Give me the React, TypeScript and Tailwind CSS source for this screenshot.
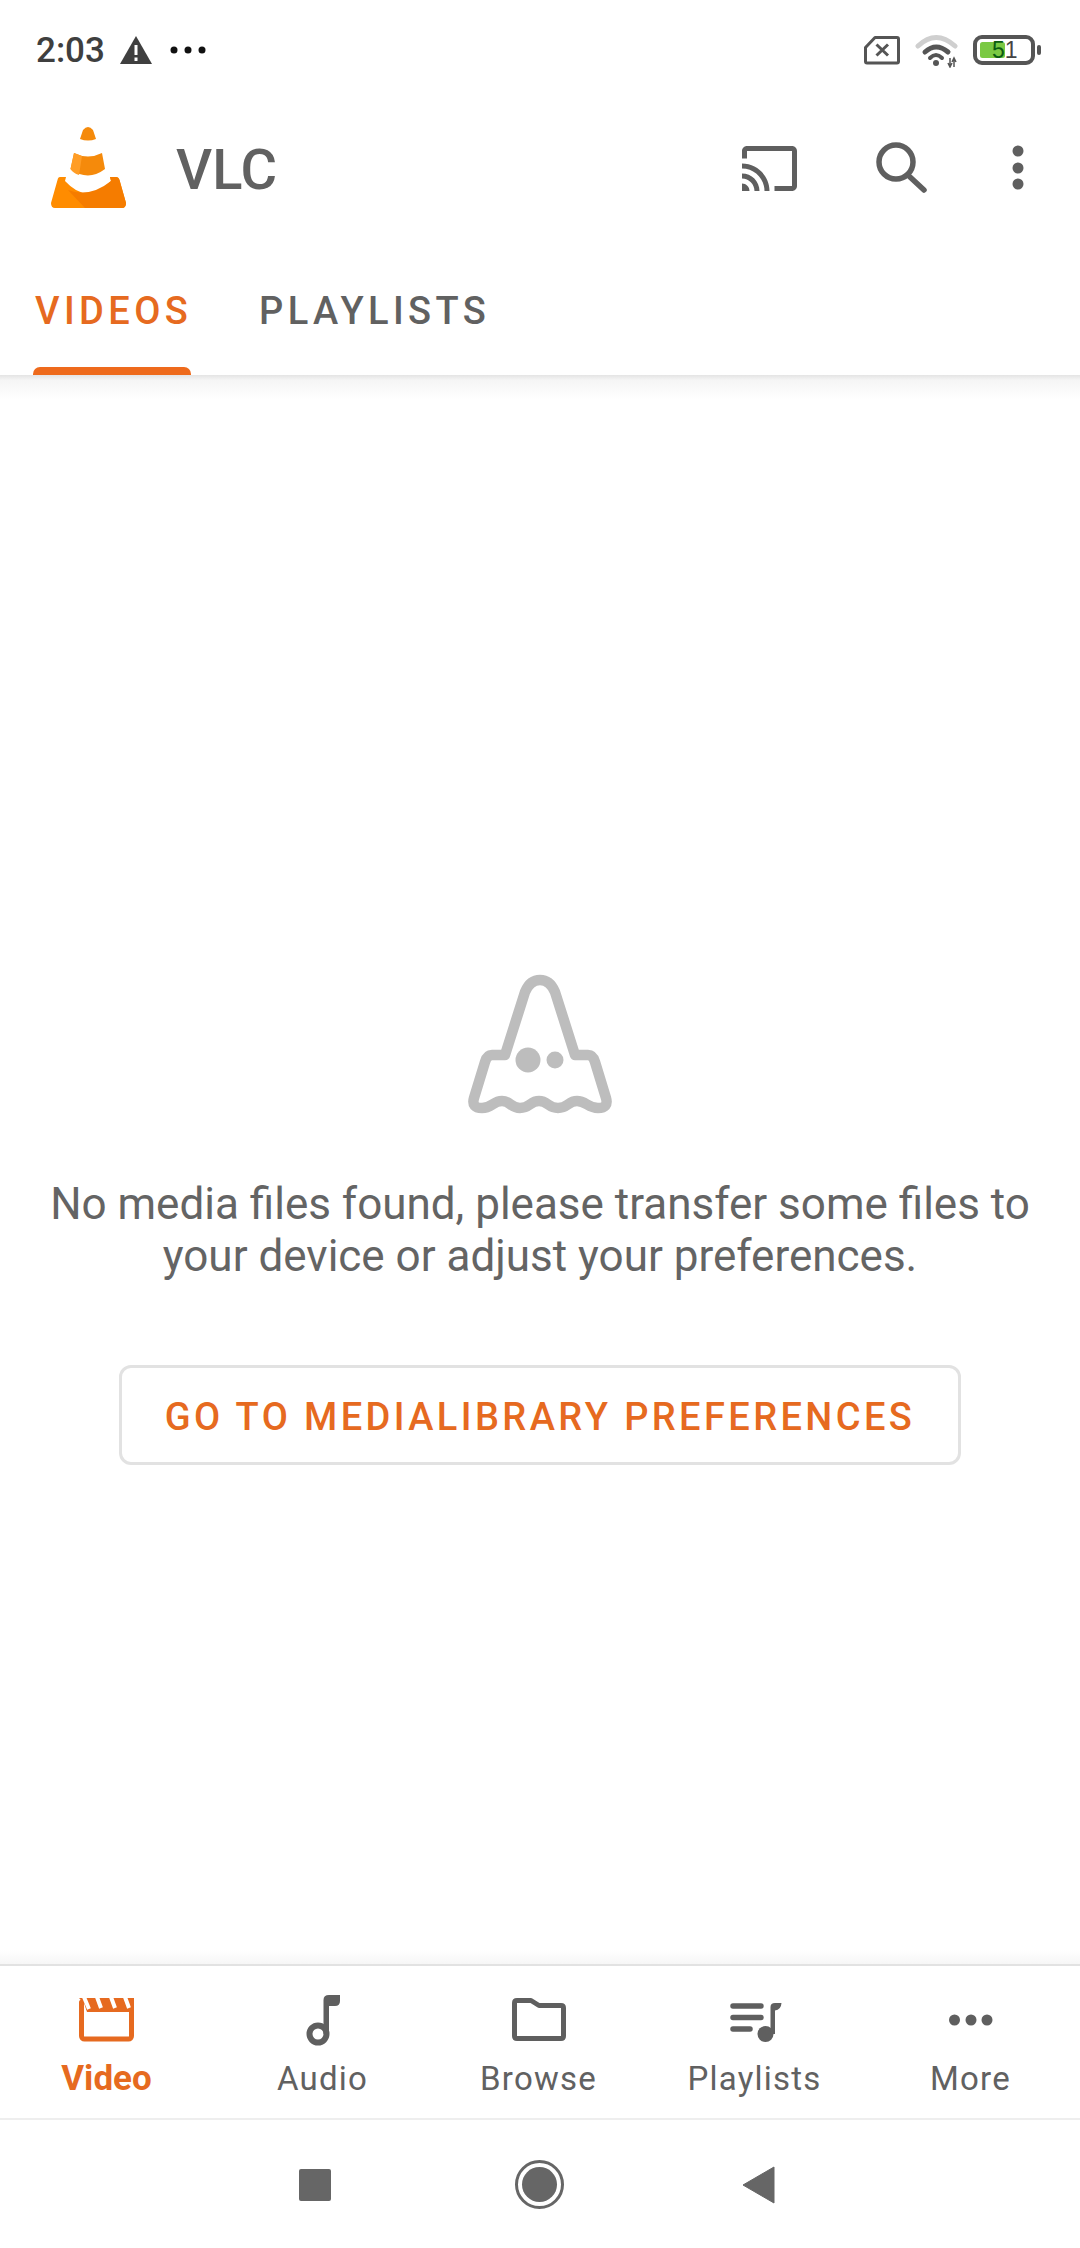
import type { ReactNode } from 'react'

const GREY = '#5f5f5f'
const ORANGE = '#e66a20'

function VideoIcon() {
  return (
    <svg width="60" height="60" viewBox="78 1990 60 60">
      <rect x="82.5" y="1999.5" width="50" height="38.5" rx="3" fill="none" stroke={ORANGE} strokeWidth="5" />
      <path d="M80 1997H135V2011H88L85 2002Z" fill={ORANGE} />
      <path d="M80 1999L85 2011H80Z" fill={ORANGE} />
      <path d="M85 1996L90 2008M98 1996L102 2007M112 1996L116 2007M126 1996L130 2007" stroke="#fff" strokeWidth="4" />
    </svg>
  )
}

function AudioIcon() {
  return (
    <svg width="60" height="60" viewBox="294 1990 60 60" fill={GREY}>
      <circle cx="319" cy="2033" r="8.5" fill="none" stroke={GREY} strokeWidth="6" />
      <path d="M324.5 2033V1999Q324.5 1994 330 1994H341V2000Q341 2005 336 2005H330V2033Z" />
    </svg>
  )
}

function BrowseIcon() {
  return (
    <svg width="60" height="60" viewBox="510 1990 60 60">
      <path
        d="M518 1999.5H532L540 2004.5H562Q564.500 2004.500 564.500 2007V2035Q564.500 2037.500 562 2037.500H518Q515.500 2037.500 515.500 2035V2002Q515.500 1999.500 518 1999.500Z"
        fill="none"
        stroke={GREY}
        strokeWidth="5"
        strokeLinejoin="round"
      />
    </svg>
  )
}

function PlaylistsIcon() {
  return (
    <svg width="60" height="60" viewBox="726 1990 60 60" fill={GREY}>
      <path d="M734 2005H762M734 2016.500H762M734 2028H751" stroke={GREY} strokeWidth="5.500" strokeLinecap="round" />
      <circle cx="766.500" cy="2033" r="8" />
      <path d="M771.500 2033V2006Q771.500 2002 776 2002H782.500Q782 2009 776 2009.500V2033Z" />
    </svg>
  )
}

function MoreIcon() {
  return (
    <svg width="60" height="60" viewBox="942 1990 60 60" fill={GREY}>
      <circle cx="955.500" cy="2019" r="5.500" />
      <circle cx="972" cy="2019" r="5.500" />
      <circle cx="988" cy="2019" r="5.500" />
    </svg>
  )
}

function NavItem({ icon, label, active }: { icon: ReactNode; label: string; active?: boolean }) {
  return (
    <div className="flex flex-col items-center pt-[25px] pr-[3px]">
      {icon}
      <div
        className={
          active
            ? 'mt-[8px] text-[35px] leading-[40px] font-bold text-[#e66a20]'
            : 'mt-[8px] text-[33px] leading-[40px] tracking-[1.200px] text-[#616161]'
        }
      >
        {label}
      </div>
    </div>
  )
}

export default function App() {
  return (
    <div className="flex h-[2248px] w-[1080px] flex-col overflow-hidden bg-white font-['Roboto',sans-serif]">
      {/* status bar */}
      <div className="flex h-[100px] shrink-0 items-center pr-[35px] pl-[36px]">
        <span className="text-[35px] leading-none font-medium text-[#3f3f3f]">2:03</span>
        <svg className="ml-[15px]" width="32" height="30" viewBox="122 35 32 30">
          <path d="M138 36L154 64H122Z" fill="#3f3f3f" />
          <path d="M136.500 45H139.500V55H136.500ZM136.500 57.500H139.500V61H136.500Z" fill="#fff" />
        </svg>
        <svg className="ml-[18px]" width="36" height="10" viewBox="172 45 36 10" fill="#111">
          <circle cx="176" cy="50" r="3.500" />
          <circle cx="190" cy="50" r="3.500" />
          <circle cx="204" cy="50" r="3.500" />
        </svg>
        <div className="ml-auto flex items-center">
          <svg width="50" height="36" viewBox="860 32 50 36" fill="none" stroke="#555" strokeWidth="3">
            <path d="M875 37.500H897Q898.500 37.500 898.500 39V61.500Q898.500 63 897 63H867Q865.500 63 865.500 61.500V47.500Z" strokeLinejoin="round" />
            <path d="M876.500 44.500L888 55.500M888 44.500L876.500 55.500" strokeWidth="3" />
          </svg>
          <svg width="60" height="36" viewBox="910 32 60 36" fill="none">
            <path d="M918 46Q936 29 955 46" stroke="#cfcfcf" strokeWidth="5" strokeLinecap="round" />
            <path d="M925 52Q936 42 948 52" stroke="#555" strokeWidth="5" strokeLinecap="round" />
            <path d="M930 58Q936 52 942 58" stroke="#555" strokeWidth="4" strokeLinecap="round" />
            <circle cx="936" cy="63" r="3" fill="#555" />
            <path d="M950 58V67M948 63L950 67L952 63M954 67V58M952 62L954 58L956 62" stroke="#555" strokeWidth="1.500" />
          </svg>
          <div className="relative h-[36px] w-[75px]">
            <svg width="75" height="36" viewBox="970 32 75 36" fill="none">
              <rect x="975" y="37" width="58" height="26" rx="7" stroke="#555" strokeWidth="4" />
              <rect x="980" y="42" width="25" height="16" rx="2.500" fill="#7ac943" />
              <rect x="1037" y="45" width="4" height="10" rx="2" fill="#555" />
            </svg>
            <span className="absolute top-[3px] left-[22px] font-['Liberation_Sans',sans-serif] text-[23px] leading-[30px] text-[#444]">
              <span className="text-[#0b5c12]">5</span>1
            </span>
          </div>
        </div>
      </div>

      {/* toolbar */}
      <div className="flex h-[136px] shrink-0 items-center pr-[41px] pl-[51px]">
        <svg width="75" height="82" viewBox="51 126 75 82">
          <path d="M80 138Q88 141 96 138L93 129Q88 123 83 129Z" fill="#f58a0b" />
          <path d="M74 152Q88 159 102 152L105 168Q88 181 70.500 168Z" fill="#f58a0b" />
          <path d="M74 152L82 155L79 174Q73 172 70.500 168Z" fill="#ff9d26" />
          <path
            d="M60 176H66L65 180Q88 205 111 180L110 176H116Q118.500 176 119.500 179L126 202Q126 207 122 207H55Q51 207 51 202L57.500 179Q58 176 60 176Z"
            fill="#ff8c00"
          />
          <path
            d="M85 207L68 189Q90 197 111 180L110 176H116Q118.500 176 119.500 179L126 202Q126 207 122 207Z"
            fill="#f57c00"
          />
        </svg>
        <span className="mt-[3px] ml-[50px] text-[56px] leading-none font-medium text-[#616161]">VLC</span>
        <svg className="ml-auto" width="70" height="60" viewBox="735 136 70 60" fill={GREY}>
          <g transform="translate(740.500 136.500) scale(2.500)">
            <path d="M21 3H3c-1.100 0-2 .9-2 2v3h2V5h18v14h-7v2h7c1.100 0 2-.9 2-2V5c0-1.100-.9-2-2-2zM1 18v3h3c0-1.660-1.340-3-3-3zm0-4v2c2.760 0 5 2.240 5 5h2c0-3.870-3.130-7-7-7zm0-4v2c4.970 0 9 4.030 9 9h2c0-6.080-4.930-11-11-11z" />
          </g>
        </svg>
        <svg className="ml-[65px]" width="65" height="60" viewBox="870 136 65 60" fill="none" stroke={GREY} strokeWidth="5.500" strokeLinecap="round">
          <circle cx="897" cy="160" r="17" />
          <path d="M911 175L925 188" />
        </svg>
        <svg className="ml-[65px]" width="40" height="60" viewBox="1000 136 40 60" fill={GREY}>
          <circle cx="1019" cy="149" r="5.500" />
          <circle cx="1019" cy="166" r="5.500" />
          <circle cx="1019" cy="182" r="5.500" />
        </svg>
      </div>

      {/* tabs */}
      <div className="flex h-[139px] shrink-0 pl-[33px] text-[38px] leading-[44px] font-medium tracking-[4.400px]">
        <div className="flex w-[158px] flex-col pt-[53px]">
          <span className="pl-[2px] whitespace-nowrap text-[#e66a20]">VIDEOS</span>
          <div className="mt-auto h-[8px] rounded-t-[7px] bg-[#ee6a1c]" />
        </div>
        <div className="ml-[68px] pt-[53px] whitespace-nowrap text-[#616161]">PLAYLISTS</div>
      </div>

      {/* empty state */}
      <div className="flex flex-1 flex-col items-center">
        <div className="h-[25px] w-full shrink-0 bg-gradient-to-b from-[#e4e4e4] via-[#f5f5f5] via-[20%] to-white" />
        <svg className="mt-[550px]" width="200" height="180" viewBox="0 0 200 180" fill="none" stroke="#bdbdbd" strokeWidth="10.500" strokeLinejoin="round">
          <path d="M65 105L85 42Q90 30 100 30Q110 30 115 42L135 105H148Q153 105 155 112L166 148C168 155 165 158 158 158C148 158 146 151 137 151C128 151 128 158 118 158C108 158 108 151 99 151C90 151 90 158 80 158C70 158 71 151 62 151C53 151 52 158 42 158C35 158 32 155 34 148L45 112Q47 105 52 105Z" />
          <circle cx="88" cy="110" r="12.500" fill="#bdbdbd" stroke="none" />
          <circle cx="115" cy="110" r="8.500" fill="#bdbdbd" stroke="none" />
        </svg>
        <p className="mt-[48px] w-[1040px] text-center text-[44px] leading-[52px] text-[#646464]">
          No media files found, please transfer some files to
          <br />
          your device or adjust your preferences.
        </p>
        <button className="mt-[83px] flex h-[100px] w-[842px] items-center justify-center rounded-[12px] border-[3px] border-[#e2e2e2] pt-[4px] text-[38px] font-medium tracking-[3.400px] text-[#e66a20]">
          GO TO MEDIALIBRARY PREFERENCES
        </button>
      </div>

      {/* bottom navigation */}
      <div className="h-[14px] shrink-0 bg-gradient-to-b from-white to-[#f6f6f6]" />
      <div className="grid h-[154px] shrink-0 grid-cols-5 border-t-[2px] border-[#e2e2e2]">
        <NavItem icon={<VideoIcon />} label="Video" active />
        <NavItem icon={<AudioIcon />} label="Audio" />
        <NavItem icon={<BrowseIcon />} label="Browse" />
        <NavItem icon={<PlaylistsIcon />} label="Playlists" />
        <NavItem icon={<MoreIcon />} label="More" />
      </div>

      {/* android nav bar */}
      <div className="flex h-[130px] shrink-0 items-center border-t-[2px] border-[#eeeeee] pt-[1px] pl-[299px]">
        <div className="h-[32px] w-[32px] rounded-[2px] bg-[#666666]" />
        <div className="ml-[184px] flex h-[49px] w-[49px] items-center justify-center rounded-full border-[3px] border-[#666666]">
          <div className="h-[35px] w-[35px] rounded-full bg-[#666666]" />
        </div>
        <svg className="ml-[179px]" width="32" height="38" viewBox="745 2167 32 38">
          <path d="M776 2168V2204L745 2186Z" fill="#666666" stroke="#666666" strokeWidth="1" strokeLinejoin="round" />
        </svg>
      </div>
    </div>
  )
}
